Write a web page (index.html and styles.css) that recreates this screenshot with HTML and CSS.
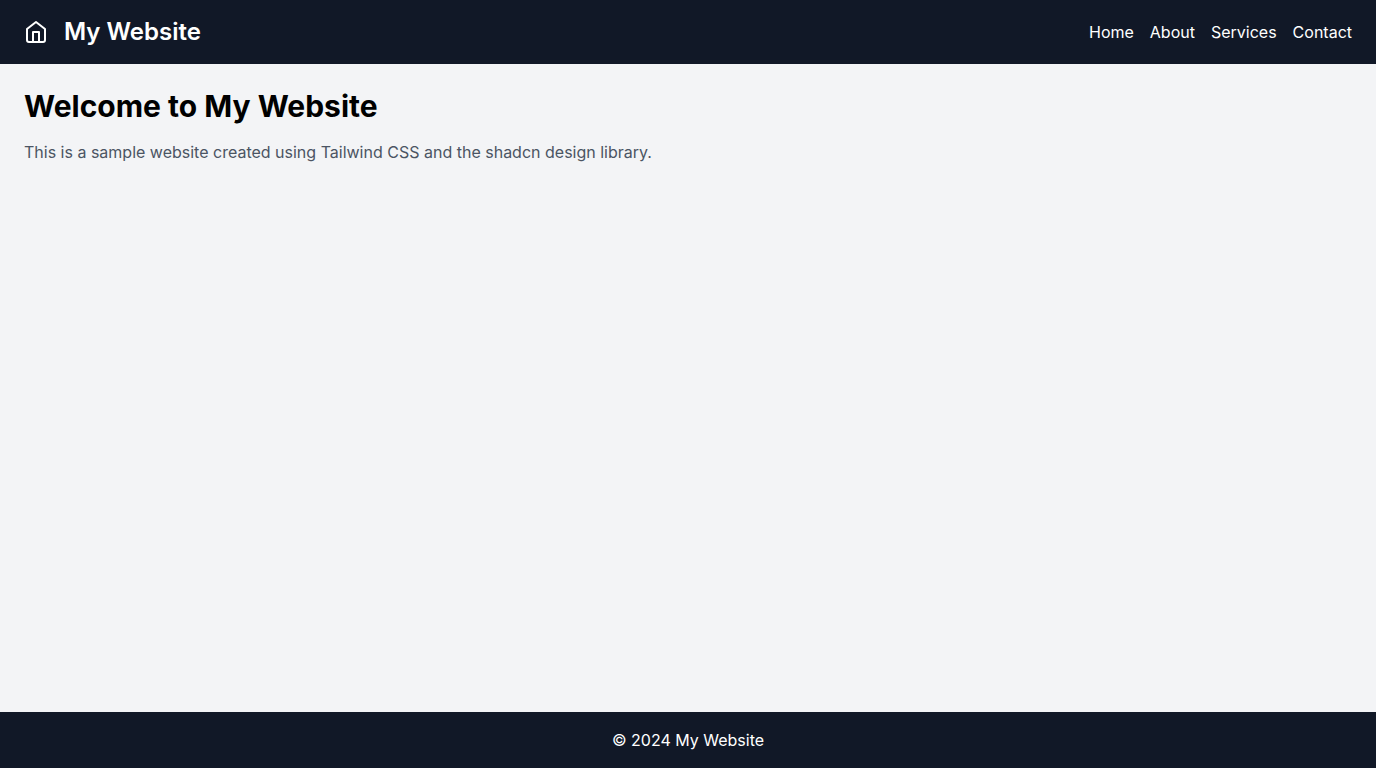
FILE: index.html
```html
<!DOCTYPE html>
<html lang="en">
<head>
  <meta charset="utf-8">
  <meta name="viewport" content="width=device-width, initial-scale=1">
  <title>My Website</title>
  <link rel="stylesheet" href="styles.css">
</head>
<body class="page">
  <header class="header">
    <div class="brand">
      <svg class="brand-icon" viewBox="0 0 24 24" fill="none" stroke="currentColor" stroke-width="2" stroke-linecap="round" stroke-linejoin="round" aria-hidden="true">
        <path d="m3 9 9-7 9 7v11a2 2 0 0 1-2 2H5a2 2 0 0 1-2-2z"/>
        <polyline points="9 22 9 12 15 12 15 22"/>
      </svg>
      <span class="brand-name">My Website</span>
    </div>
    <nav class="nav">
      <a class="nav-link" href="#">Home</a>
      <a class="nav-link" href="#">About</a>
      <a class="nav-link" href="#">Services</a>
      <a class="nav-link" href="#">Contact</a>
    </nav>
  </header>
  <main class="main">
    <h1 class="title">Welcome to My Website</h1>
    <p class="intro">This is a sample website created using Tailwind CSS and the shadcn design library.</p>
  </main>
  <footer class="footer">
    <p class="copyright">© 2024 My Website</p>
  </footer>
</body>
</html>
```
FILE: styles.css
```css
*, *::before, *::after {
  box-sizing: border-box;
}

.page {
  display: flex;
  flex-direction: column;
  min-height: 100vh;
  margin: 0;
  font-family: Inter, "Liberation Sans", sans-serif;
  font-size: 16px;
  line-height: 24px;
  color: #000000;
  background: #f3f4f6;
}

.header {
  display: flex;
  align-items: center;
  justify-content: space-between;
  padding: 16px 24px;
  color: #ffffff;
  background: #111827;
}

.brand {
  display: flex;
  align-items: center;
  gap: 16px;
}

.brand-icon {
  width: 24px;
  height: 24px;
}

.brand-name {
  font-size: 24px;
  font-weight: 600;
  line-height: 32px;
}

.nav {
  display: flex;
  gap: 16px;
}

.nav-link {
  color: inherit;
  text-decoration: none;
}

.nav-link:hover {
  text-decoration: underline;
}

.main {
  flex: 1;
  padding: 24px;
}

.title {
  margin: 0 0 16px;
  font-size: 30px;
  font-weight: 700;
  line-height: 36px;
}

.intro {
  margin: 0;
  color: #4b5563;
}

.footer {
  padding: 16px 24px;
  text-align: center;
  color: #ffffff;
  background: #111827;
}

.copyright {
  margin: 0;
}
```
